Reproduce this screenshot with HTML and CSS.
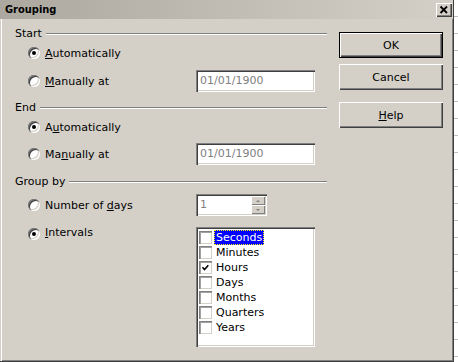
FILE: index.html
```html
<!DOCTYPE html>
<html lang="en">
<head>
<meta charset="UTF-8" />
<title>Grouping</title>
<link rel="stylesheet" href="styles.css">
</head>
<body>

<div class="window" role="dialog" aria-label="Grouping">
  <div class="titlebar">
    <span class="title">Grouping</span>
    <button class="close-btn" aria-label="Close">
      <svg width="16" height="14" viewBox="0 0 16 14"><path d="M4.5 3.5 L11 10 M11 3.5 L4.5 10" stroke="#000" stroke-width="1.8" fill="none"/></svg>
    </button>
  </div>

  <div class="dialog-body">
    <div class="form">

      <div class="group-head"><span>Start</span><span class="rule"></span></div>
      <div class="row row-plain">
        <span class="radio checked"></span>
        <span class="label"><u>A</u>utomatically</span>
      </div>
      <div class="row row-field">
        <span class="radio"></span>
        <span class="label"><u>M</u>anually at</span>
        <div class="field">01/01/1900</div>
      </div>

      <div class="group-head group-end"><span>End</span><span class="rule"></span></div>
      <div class="row row-plain">
        <span class="radio checked"></span>
        <span class="label">A<u>u</u>tomatically</span>
      </div>
      <div class="row row-field row-tight">
        <span class="radio"></span>
        <span class="label">Ma<u>n</u>ually at</span>
        <div class="field">01/01/1900</div>
      </div>

      <div class="group-head group-by"><span>Group by</span><span class="rule"></span></div>
      <div class="row row-field">
        <span class="radio"></span>
        <span class="label">Number of <u>d</u>ays</span>
        <div class="spin">
          <span class="spin-value">1</span>
          <div class="spin-btns">
            <span class="spin-btn"><span class="arrow up"></span></span>
            <span class="spin-btn"><span class="arrow down"></span></span>
          </div>
        </div>
      </div>
      <div class="row row-list">
        <span class="radio checked"></span>
        <span class="label"><u>I</u>ntervals</span>
        <div class="list" role="listbox">
          <div class="item"><span class="check"></span><span class="item-text selected">Seconds</span></div>
          <div class="item"><span class="check"></span><span class="item-text">Minutes</span></div>
          <div class="item"><span class="check"><svg width="13" height="13" viewBox="0 0 13 13"><path d="M3.5 6.3 L5.5 8.5 L9.3 4.3" stroke="#000" stroke-width="1.6" fill="none"/></svg></span><span class="item-text">Hours</span></div>
          <div class="item"><span class="check"></span><span class="item-text">Days</span></div>
          <div class="item"><span class="check"></span><span class="item-text">Months</span></div>
          <div class="item"><span class="check"></span><span class="item-text">Quarters</span></div>
          <div class="item"><span class="check"></span><span class="item-text">Years</span></div>
        </div>
      </div>

    </div>

    <div class="buttons">
      <button class="btn btn-default">OK</button>
      <button class="btn btn-cancel">Cancel</button>
      <button class="btn btn-help"><u>H</u>elp</button>
    </div>
  </div>
</div>

</body>
</html>
```

FILE: styles.css
```css
* {
  box-sizing: border-box;
}
html, body {
  margin: 0;
}
body {
  width: 458px;
  height: 362px;
  overflow: hidden;
  background: repeating-linear-gradient(to bottom, #fff 0 16px, #c0c0c0 16px 17px);
  font-family: "DejaVu Sans", "Liberation Sans", sans-serif;
  font-size: 11px;
  color: #000;
}

.window {
  width: 454px;
  height: 362px;
  background-color: #d4d0c8;
  border-right: 1px solid #404040;
  border-bottom: 1px solid #404040;
  box-shadow: inset 1px 0 #d4d0c8, inset 2px 0 #fff, inset -1px -1px #808080;
  display: flex;
  flex-direction: column;
}

.titlebar {
  height: 19px;
  display: flex;
  align-items: flex-start;
  padding-left: 5px;
  background: linear-gradient(to right, #aca89f, #d4d0c8);
}
.title {
  font-family: "DejaVu Sans Condensed", "Liberation Sans", sans-serif;
  font-weight: 700;
  line-height: 19px;
}
.close-btn {
  margin: 3px 1px 0 auto;
  width: 16px;
  height: 14px;
  padding: 0;
  border: none;
  background-color: #d4d0c8;
  box-shadow: inset 1px 1px #fff, inset -1px -1px #404040, inset -2px -2px #808080;
  display: flex;
}

.dialog-body {
  display: flex;
  padding-left: 15px;
}

.form {
  width: 312px;
  padding-top: 8px;
}

.group-head {
  height: 14px;
  display: flex;
  align-items: center;
  line-height: 14px;
}
.group-head .rule {
  flex: 1;
  height: 2px;
  margin-left: 4px;
  border-top: 1px solid #808080;
  border-bottom: 1px solid #fff;
}
.group-end {
  margin-top: 9px;
}
.group-by {
  margin-top: 10px;
}

.row {
  display: flex;
  align-items: center;
  padding-left: 13px;
}
.row-plain {
  height: 24px;
}
.row-field {
  height: 22px;
  margin-top: 5px;
}
.row-tight {
  margin-top: 4px;
}
.row-list {
  align-items: flex-start;
  margin-top: 11px;
}
.row-list .radio {
  margin-top: 1px;
}
.row-list .label {
  line-height: 12px;
}

.label {
  flex: 0 0 151px;
  margin-left: 5px;
  white-space: nowrap;
}

.radio {
  flex: none;
  width: 12px;
  height: 12px;
  border-radius: 50%;
  background-color: #fff;
  box-shadow: inset 1px 1px #808080, inset 2px 2px #404040, inset -1px -1px #fff, inset -2px -2px #d4d0c8;
  display: flex;
  align-items: center;
  justify-content: center;
}
.radio.checked::after {
  content: "";
  width: 4px;
  height: 4px;
  border-radius: 50%;
  background-color: #000;
}

.field {
  width: 119px;
  height: 22px;
  padding: 0 4px;
  line-height: 22px;
  color: #808080;
  background-color: #fff;
  box-shadow: inset 1px 1px #808080, inset 2px 2px #404040, inset -1px -1px #fff, inset -2px -2px #d4d0c8;
}

.spin {
  width: 71px;
  height: 22px;
  padding: 2px;
  display: flex;
  background-color: #fff;
  box-shadow: inset 1px 1px #808080, inset 2px 2px #404040, inset -1px -1px #fff, inset -2px -2px #d4d0c8;
}
.spin-value {
  flex: 1;
  padding-left: 2px;
  line-height: 18px;
  color: #808080;
}
.spin-btns {
  width: 14px;
  display: flex;
  flex-direction: column;
}
.spin-btn {
  flex: 1;
  display: flex;
  align-items: center;
  justify-content: center;
  background-color: #d4d0c8;
  box-shadow: inset 1px 1px #fff, inset -1px -1px #808080;
}
.arrow {
  width: 0;
  height: 0;
  border-left: 2px solid transparent;
  border-right: 2px solid transparent;
}
.arrow.up {
  border-bottom: 2px solid #808080;
}
.arrow.down {
  border-top: 2px solid #808080;
}

.list {
  width: 119px;
  height: 120px;
  padding: 3px 0 0 3px;
  background-color: #fff;
  box-shadow: inset 1px 1px #808080, inset 2px 2px #404040, inset -1px -1px #fff, inset -2px -2px #d4d0c8;
}
.item {
  height: 15px;
  display: flex;
  align-items: center;
}
.check {
  flex: none;
  width: 13px;
  height: 13px;
  background-color: #fff;
  box-shadow: inset 1px 1px #808080, inset 2px 2px #a0a0a0, inset -1px -1px #d4d0c8;
  display: flex;
}
.item-text {
  margin-left: 2px;
  padding: 0 1px;
  line-height: 13px;
  border: 1px solid transparent;
}
.item-text.selected {
  color: #fff;
  background-color: #0000ff;
  border: 1px dotted #ffff00;
}

.buttons {
  margin-left: 12px;
  padding-top: 13px;
  display: flex;
  flex-direction: column;
}
.btn {
  width: 104px;
  height: 26px;
  padding: 0;
  border: none;
  font: inherit;
  color: #000;
  background-color: #d4d0c8;
  box-shadow: inset 1px 1px #fff, inset -1px -1px #404040, inset -2px -2px #808080;
}
.btn-default {
  border: 1px solid #000;
}
.btn-cancel {
  margin-top: 6px;
}
.btn-help {
  margin-top: 12px;
}
```
